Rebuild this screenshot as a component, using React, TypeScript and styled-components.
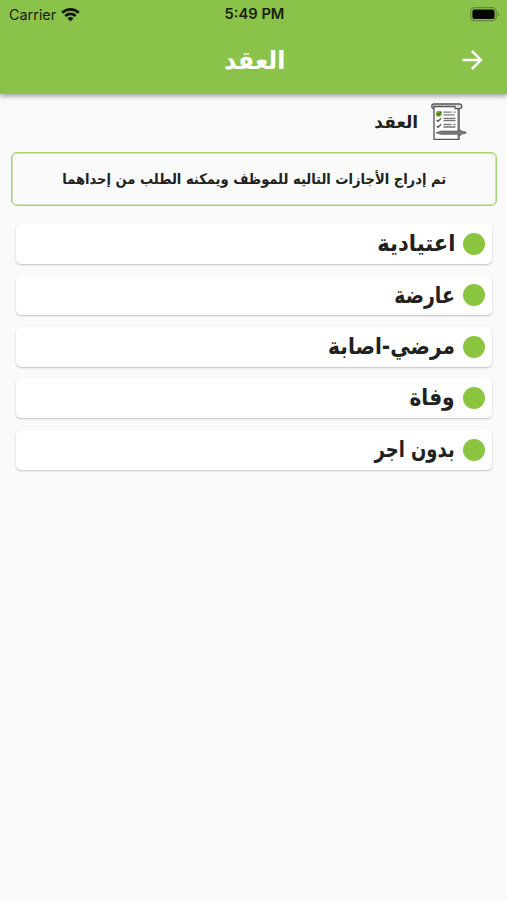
import React from 'react';
import styled, { createGlobalStyle } from 'styled-components';

const GlobalStyle = createGlobalStyle`
  * { box-sizing: border-box; }
  body { margin: 0; background: #fafafa; }
`;

const Screen = styled.div`
  width: 507px;
  height: 900px;
  overflow: hidden;
  background: #fafafa;
  color: #212121;
  font-family: 'DejaVu Sans', 'Noto Sans', sans-serif;
`;

const Header = styled.header`
  height: 94px;
  background: #8bc34a;
  box-shadow: 0 2px 5px rgba(0, 0, 0, 0.38);
`;

const StatusBar = styled.div`
  height: 27px;
  padding: 0 7px 0 9px;
  display: grid;
  grid-template-columns: 1fr auto 1fr;
  align-items: center;
  color: #17210b;
  font: 400 14.4px/27px Inter, sans-serif;
`;

const Carrier = styled.div`
  display: flex;
  align-items: center;
  gap: 5px;
  padding-top: 1px;
`;

const Clock = styled.div`
  font-weight: 600;
  font-size: 14.7px;
`;

const BatterySlot = styled.div`
  display: flex;
  justify-content: flex-end;
`;

const AppBar = styled.div`
  height: 67px;
  padding: 0 22px;
  display: grid;
  grid-template-columns: 24px 1fr 24px;
  align-items: center;
`;

const Label = styled.span<{ $size: number; $stretch?: number }>`
  display: block;
  direction: rtl;
  white-space: nowrap;
  font-size: ${(p) => p.$size}px;
  font-weight: 700;
  line-height: 1.2;
  transform: scaleX(${(p) => p.$stretch ?? 1});
  transform-origin: right center;
`;

const Title = styled.h1`
  margin: 0;
  display: flex;
  justify-content: center;
  color: #fff;
`;

const SectionHead = styled.div`
  direction: rtl;
  height: 58px;
  padding: 0 40px 2px 0;
  display: flex;
  align-items: center;
  gap: 12px;
`;

const Notice = styled.div`
  direction: rtl;
  margin: 0 10px 0 11px;
  height: 54px;
  padding: 2px 50px 0 0;
  display: flex;
  align-items: center;
  border: 1.5px solid #a5d374;
  border-radius: 6px;
  box-shadow: inset 0 0 0 0.5px #a5d374;
`;

const List = styled.ul`
  list-style: none;
  direction: rtl;
  margin: 18px 15px 0 16px;
  padding: 0;
  display: flex;
  flex-direction: column;
  gap: 11.4px;
`;

const Row = styled.li`
  height: 40px;
  padding-right: 7px;
  display: flex;
  align-items: center;
  gap: 8px;
  background: #fff;
  border-radius: 5px;
  box-shadow: 0 1px 2px rgba(0, 0, 0, 0.23);
`;

const Dot = styled.span`
  width: 22px;
  height: 22px;
  border-radius: 50%;
  background: #8bc540;
`;

const WifiIcon = () => (
  <svg width="19" height="15" viewBox="0 0 19 15" fill="none" stroke="#101708" strokeWidth="2.7">
    <path d="M1.2 5.7a11.8 11.8 0 0 1 16.6 0" />
    <path d="M4.3 9a7.5 7.5 0 0 1 10.4 0" />
    <path d="M9.5 14.4 6.5 11.2a4.2 4.2 0 0 1 6 0z" fill="#101708" stroke="none" />
  </svg>
);

const BatteryIcon = () => (
  <svg width="30" height="15" viewBox="0 0 30 15">
    <rect x="0.7" y="0.7" width="25.6" height="13" rx="4" fill="none" stroke="#64893a" strokeWidth="1.2" />
    <rect x="2.4" y="2.4" width="22.2" height="9.6" rx="2" fill="#050802" />
    <path d="M27.8 5v4.4c1.8-.6 1.8-3.8 0-4.4z" fill="#64893a" />
  </svg>
);

const ArrowIcon = () => (
  <svg width="24" height="24" viewBox="0 0 24 24" fill="none" stroke="#fff" strokeWidth="2.5">
    <path d="M1.5 11h17.5M10.8 1.8 20 11l-9.2 9.2" />
  </svg>
);

const ContractIcon = () => (
  <svg width="37" height="38" viewBox="0 0 37 38" fill="none" stroke="#555" strokeWidth="1.3">
    <path d="M4 5.5V36.4h25V5" fill="#fff" />
    <path d="M28.5 5v31" stroke="#777" strokeWidth="2" />
    <path d="M3.5 1h26a2.3 2.3 0 0 1 0 4.7H25V3.5H3.8v2.2A2.4 2.4 0 0 1 3.5 1z" fill="#ddd" />
    <circle cx="8.8" cy="10.8" r="3" fill="#79aa37" stroke="none" />
    <path d="m7.3 10.8 1.2 1.1 3-3.3" stroke="#416125" />
    <path d="m6.7 17 1.4 1.3 3-3M6.7 23l1.4 1.3 3-3" />
    <path d="M13.5 9.2h8m2 0h2M13.5 11.8h11M13.5 15.5h12M13.5 17.7h12M13.5 21.5h8m2 0h2M13.5 24h12" stroke="#777" />
    <path d="m6 29.8 5-1.7h17v-1h3v1l5 1-.1 1.2-5 1v1h-3v-1H11z" fill="#777" stroke="#666" strokeWidth="0.8" />
  </svg>
);

const leaveTypes = [
  { name: 'اعتيادية', stretch: 0.915 },
  { name: 'عارضة', stretch: 0.82 },
  { name: 'مرضي-اصابة', stretch: 0.875 },
  { name: 'وفاة', stretch: 0.875 },
  { name: 'بدون اجر', stretch: 0.78 },
];

export default function App() {
  return (
    <Screen>
      <GlobalStyle />
      <Header>
        <StatusBar>
          <Carrier>Carrier <WifiIcon /></Carrier>
          <Clock>5:49 PM</Clock>
          <BatterySlot><BatteryIcon /></BatterySlot>
        </StatusBar>
        <AppBar>
          <span />
          <Title><Label $size={25} $stretch={0.955}>العقد</Label></Title>
          <ArrowIcon />
        </AppBar>
      </Header>
      <SectionHead>
        <ContractIcon />
        <Label $size={17.5} $stretch={0.97}>العقد</Label>
      </SectionHead>
      <Notice>
        <Label $size={14.5} $stretch={0.903}>تم إدراج الأجازات التاليه للموظف ويمكنه الطلب من إحداهما</Label>
      </Notice>
      <List>
        {leaveTypes.map((leave) => (
          <Row key={leave.name}>
            <Dot />
            <Label $size={23} $stretch={leave.stretch}>{leave.name}</Label>
          </Row>
        ))}
      </List>
    </Screen>
  );
}
